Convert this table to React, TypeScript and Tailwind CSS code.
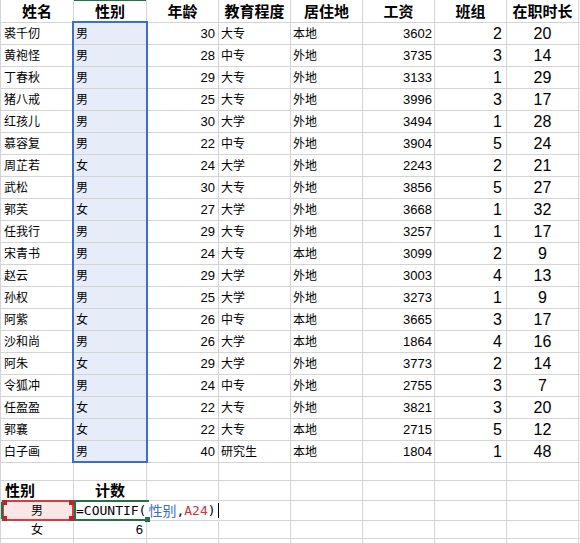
import type { ReactNode } from "react";
import clsx from "clsx";

type Cell = { content?: ReactNode; className?: string };

const colWidths = [
  "w-[73px]",
  "w-[73px]",
  "w-[72px]",
  "w-[72px]",
  "w-[72px]",
  "w-[72px]",
  "w-[72px]",
  "w-[72px]",
];

const headers = ["姓名", "性别", "年龄", "教育程度", "居住地", "工资", "班组", "在职时长"];

const rows: [string, string, number, string, string, number, number, number][] = [
  ["裘千仞", "男", 30, "大专", "本地", 3602, 2, 20],
  ["黄袍怪", "男", 28, "中专", "外地", 3735, 3, 14],
  ["丁春秋", "男", 29, "大专", "外地", 3133, 1, 29],
  ["猪八戒", "男", 25, "大专", "外地", 3996, 3, 17],
  ["红孩儿", "男", 30, "大学", "外地", 3494, 1, 28],
  ["慕容复", "男", 22, "中专", "外地", 3904, 5, 24],
  ["周芷若", "女", 24, "大学", "外地", 2243, 2, 21],
  ["武松", "男", 30, "大专", "外地", 3856, 5, 27],
  ["郭芙", "女", 27, "大学", "外地", 3668, 1, 32],
  ["任我行", "男", 29, "大专", "外地", 3257, 1, 17],
  ["宋青书", "男", 24, "大专", "本地", 3099, 2, 9],
  ["赵云", "男", 29, "大学", "外地", 3003, 4, 13],
  ["孙权", "男", 25, "大学", "外地", 3273, 1, 9],
  ["阿紫", "女", 26, "中专", "本地", 3665, 3, 17],
  ["沙和尚", "男", 26, "大学", "本地", 1864, 4, 16],
  ["阿朱", "女", 29, "大学", "外地", 3773, 2, 14],
  ["令狐冲", "男", 24, "中专", "外地", 2755, 3, 7],
  ["任盈盈", "女", 22, "大专", "外地", 3821, 3, 20],
  ["郭襄", "女", 22, "大专", "本地", 2715, 5, 12],
  ["白子画", "男", 40, "研究生", "本地", 1804, 1, 48],
];

// per-column styling for the data rows
const dataCls = [
  "text-[12px] pl-[3px]",
  "text-[12px] pl-[2px] bg-[#e6edf8]",
  "text-[13px] justify-end pr-[3px]",
  "text-[12px] pl-[2px]",
  "text-[12px] pl-[2px]",
  "text-[13px] justify-end pr-[2px]",
  "text-[16px] justify-end pr-[4px]",
  "text-[16px] justify-center",
];

function Row({ height, cells = [] }: { height: string; cells?: Cell[] }) {
  return (
    <div className={clsx("flex", height)}>
      {colWidths.map((w, i) => (
        <div
          key={i}
          className={clsx(
            "flex shrink-0 items-center whitespace-nowrap border-b border-r border-[#d4d4d4] leading-none",
            w,
            cells[i]?.className
          )}
        >
          {cells[i]?.content}
        </div>
      ))}
      <div className="flex-1 border-b border-[#d4d4d4]" />
    </div>
  );
}

function Corner({ className }: { className: string }) {
  return <div className={clsx("absolute h-[5px] w-[5px] bg-[#b5282e]", className)} />;
}

export default function App() {
  return (
    <div className="relative h-[543px] w-[580px] overflow-hidden border-l border-[#d4d4d4] bg-white font-['Liberation_Sans','Noto_Sans_CJK_SC',sans-serif] text-black">
      <Row
        height="h-[23px]"
        cells={headers.map((h, i) => ({
          content: h,
          className: clsx(
            "justify-center text-[15px] font-bold",
            i === 1 && "shadow-[inset_0_1px_0_#217346]"
          ),
        }))}
      />
      {rows.map((r, ri) => (
        <Row
          key={ri}
          height="h-[22px]"
          cells={r.map((v, i) => ({ content: v, className: dataCls[i] }))}
        />
      ))}
      <Row height="h-[18px]" />
      <Row
        height="h-[20px]"
        cells={[
          { content: "性别", className: "text-[15px] font-bold pl-[4px]" },
          { content: "计数", className: "text-[15px] font-bold justify-center" },
        ]}
      />
      <Row
        height="h-[20px]"
        cells={[
          { content: "男", className: "text-[12px] justify-center bg-[#fbe6e6]" },
          {
            content: (
              <span className="flex items-center font-['DejaVu_Sans_Mono','Noto_Sans_CJK_SC',monospace] text-[13px]">
                =COUNTIF(
                <span className="ml-[2px] text-[14px] text-[#3b6dc8]">性别</span>,
                <span className="text-[#c8353b]">A24</span>)
                <span className="ml-[2px] inline-block h-[15px] w-px bg-black" />
              </span>
            ),
            className: "pl-[2px] border-r-transparent",
          },
          { className: "border-r-transparent" },
        ]}
      />
      <Row
        height="h-[18px]"
        cells={[
          { content: "女", className: "text-[12px] justify-center" },
          { content: 6, className: "text-[13px] justify-end pr-[3px]" },
        ]}
      />
      <Row height="h-[20px]" />

      {/* range highlight for 性别 */}
      <div className="pointer-events-none absolute left-[71px] top-[21px] h-[442px] w-[76px] border-2 border-[#3c6fca]" />

      {/* A24 reference highlight, with the row header marker on its left */}
      <div className="pointer-events-none absolute left-[1px] top-[500px] h-[21px] w-[72px] border-2 border-[#cf3f45]">
        <Corner className="-left-[2px] -top-[2px]" />
        <Corner className="-right-[2px] -top-[2px]" />
        <Corner className="-bottom-[2px] -left-[2px]" />
        <Corner className="-bottom-[2px] -right-[2px]" />
        <div className="absolute -left-[3px] top-0 h-[17px] w-[2px] bg-[#217346]" />
      </div>

      {/* active cell B24 with its fill handle */}
      <div className="pointer-events-none absolute left-[73px] top-[500px] h-[21px] w-[75px] border-b-2 border-l-2 border-t-2 border-[#217346]">
        <div className="absolute -bottom-[3px] -right-[1px] h-[5px] w-[5px] bg-[#217346]" />
      </div>
    </div>
  );
}
